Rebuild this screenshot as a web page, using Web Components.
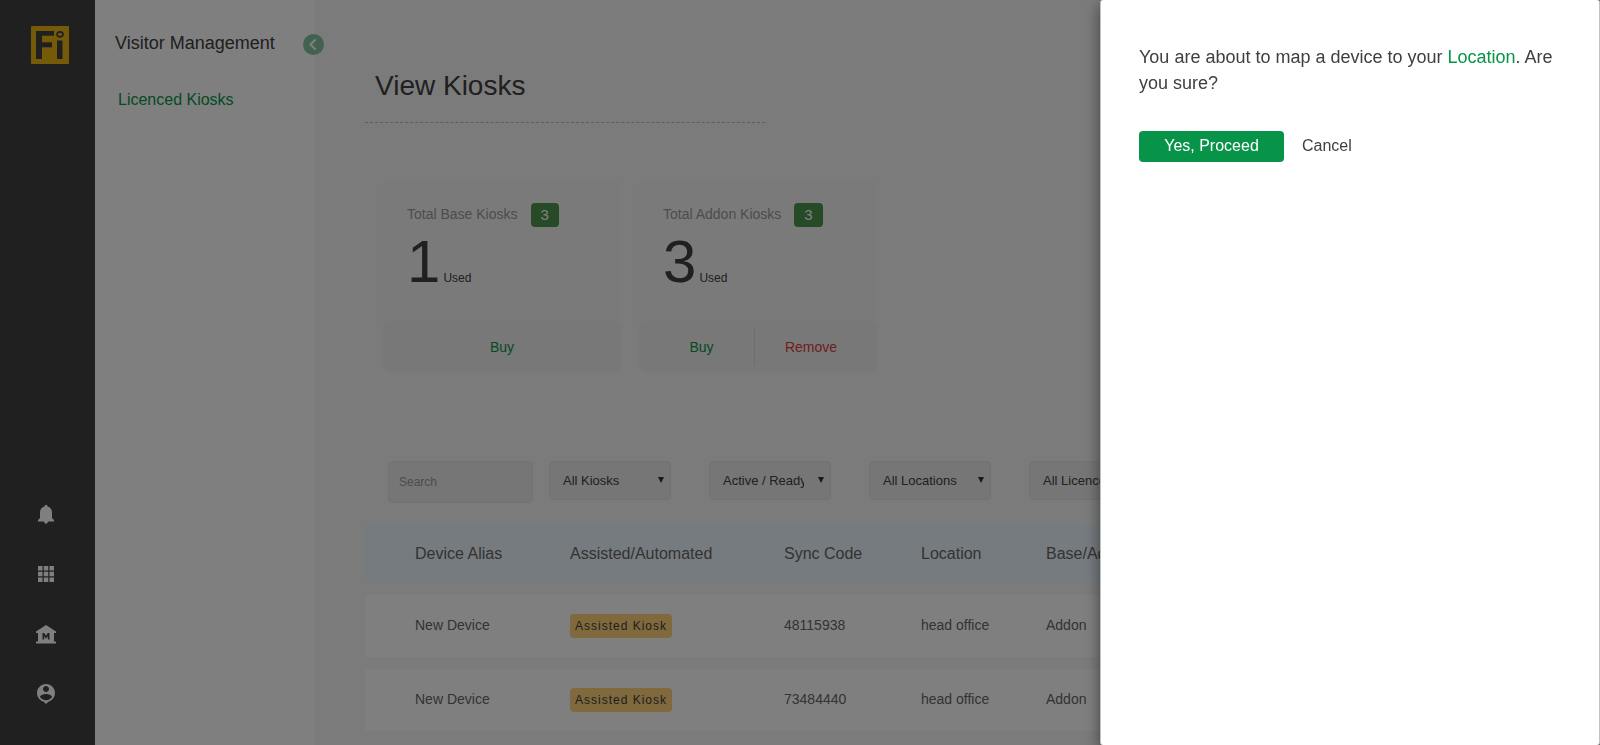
<!DOCTYPE html>
<html lang="en">
<head>
<meta charset="utf-8">
<title>View Kiosks</title>
<meta name="viewport" content="width=device-width, initial-scale=1">
<style>
  html, body { margin: 0; height: 100%; }
  body { font-family: "Liberation Sans", Arial, sans-serif; color: #404040; background: #f7f7f7; overflow: hidden; }
</style>
</head>
<body>
<kiosk-app></kiosk-app>
<script>
const define = (name, html) => {
  const template = document.createElement('template');
  template.innerHTML = html;
  customElements.define(name, class extends HTMLElement {
    constructor() {
      super();
      this.attachShadow({ mode: 'open' }).appendChild(template.content.cloneNode(true));
    }
  });
};

define('app-rail', `
  <style>
    :host { display: flex; flex-direction: column; justify-content: space-between; box-sizing: border-box; width: 95px; padding: 26px 0 21px; background: #404040; }
    .logo { display: block; width: 38px; height: 38px; margin-left: 31px; }
    nav { display: flex; flex-direction: column; padding-right: 3px; }
    button { display: grid; place-items: center; height: 60px; padding: 0; border: 0; background: none; color: #fff; }
    svg { display: block; }
  </style>
  <a class="logo" href="#" aria-label="Home">
    <svg width="38" height="38" viewBox="0 0 38 38">
      <rect width="38" height="38" rx="1" fill="#ebb414"/>
      <g fill="#404040">
        <rect x="5" y="5" width="6" height="28"/><rect x="5" y="5" width="18" height="4.700"/><rect x="5" y="16.300" width="16" height="5"/>
        <rect x="26" y="14.500" width="5.500" height="18.500"/>
      </g>
      <ellipse cx="29" cy="8.300" rx="3" ry="2.500" fill="none" stroke="#404040" stroke-width="1.700"/>
    </svg>
  </a>
  <nav aria-label="Main">
    <button aria-label="Notifications"><svg width="24" height="24" viewBox="0 0 24 24" fill="currentColor"><path d="M12 21.700c1.100 0 1.900-.9 1.900-2.200h-3.800c0 1.300.8 2.200 1.900 2.200zM18 16v-5.500c0-3-1.700-5.400-4.500-6V4.200a1.500 1.500 0 0 0-3 0v.3C7.700 5.100 6 7.500 6 10.500V16l-2 2v1.500h16V18z"/></svg></button>
    <button aria-label="Apps"><svg width="24" height="24" viewBox="0 0 24 24" fill="currentColor"><path d="M4 4h4.500v4.500H4zM9.750 4h4.500v4.500h-4.500zM15.500 4H20v4.500h-4.500zM4 9.750h4.500v4.500H4zM9.750 9.750h4.500v4.500h-4.500zM15.500 9.750H20v4.500h-4.500zM4 15.500h4.500V20H4zM9.750 15.500h4.500V20h-4.500zM15.500 15.500H20V20h-4.500z"/></svg></button>
    <button aria-label="Premises"><svg width="24" height="24" viewBox="0 0 24 24" fill="currentColor"><path fill-rule="evenodd" d="M12 3 2 9.500V11h2v8.500H2v2h20v-2h-2V11h2V9.500zM15.500 17.500h-1.700v-3.400L12 16.700l-1.800-2.600v3.400H8.500v-6.500h1.700l1.800 2.800 1.800-2.800h1.700z"/></svg></button>
    <button aria-label="Profile"><svg width="24" height="24" viewBox="0 0 24 24" fill="currentColor"><path d="M12 2c-4.970 0-9 4.030-9 9 0 4.170 2.840 7.670 6.690 8.690L12 22l2.310-2.310C18.160 18.670 21 15.170 21 11c0-4.970-4.030-9-9-9zm0 2c1.660 0 3 1.340 3 3s-1.340 3-3 3-3-1.340-3-3 1.340-3 3-3zm0 14.300c-2.500 0-4.710-1.280-6-3.220.03-1.990 4-3.080 6-3.080 1.990 0 5.970 1.090 6 3.080-1.290 1.940-3.500 3.220-6 3.220z"/></svg></button>
  </nav>`);

define('section-nav', `
  <style>
    :host { display: block; position: relative; box-sizing: border-box; width: 220px; padding: 30px 20px; background: #fff; }
    h2 { margin: 0; font-size: 18px; line-height: 26px; font-weight: 400; }
    a { display: block; margin: 31px 0 0 3px; font-size: 16px; line-height: 26px; color: #089448; text-decoration: none; }
    button { position: absolute; top: 34px; right: -9px; width: 21px; height: 21px; padding: 0; border: 0; border-radius: 50%; background: #84c4a0; }
    svg { display: block; }
  </style>
  <h2>Visitor Management</h2>
  <a href="#">Licenced Kiosks</a>
  <button aria-label="Collapse menu"><svg width="21" height="21" viewBox="0 0 21 21"><path d="M12.500 5.500 7.500 10.500l5 5" fill="none" stroke="#fff" stroke-width="2"/></svg></button>`);

define('kiosk-card', `
  <style>
    :host { display: flex; flex-direction: column; width: 238px; height: 193px; border-radius: 8px; background: #f5f5f5; }
    .body { flex: 1; padding: 24px 24px 0; }
    .label { display: flex; align-items: center; gap: 13px; height: 24px; font-size: 14px; color: #999; }
    ::slotted([slot="label"]) { padding-bottom: 2px; }
    .total { padding: 0 10px; border-radius: 4px; background: #4f954f; color: #fff; font-size: 15px; line-height: 24px; }
    .count { font-size: 60px; line-height: 70px; }
    small { font-size: 12px; margin-left: 3px; }
    footer { display: flex; align-items: center; box-sizing: border-box; height: 51px; padding: 0 10px; border-radius: 8px; border-top: 1px solid #ececec; background: #f1f1f1; }
    ::slotted(button) { flex: 1; height: 38px; padding: 0; border: 0; background: none; font: 14px "Liberation Sans", Arial, sans-serif; color: #089448; }
    ::slotted(.remove) { color: #dc3c3c; border-left: 1px solid #dcdcdc; border-radius: 0; flex-basis: 8px; }
  </style>
  <div class="body">
    <div class="label"><slot name="label"></slot><span class="total"><slot name="total"></slot></span></div>
    <div class="count"><slot name="used"></slot><small>Used</small></div>
  </div>
  <footer><slot name="action"></slot></footer>`);

customElements.define('filter-select', class extends HTMLElement {
  connectedCallback() {
    if (this.shadowRoot) return;
    const name = this.getAttribute('label');
    const text = this.getAttribute('value');
    this.attachShadow({ mode: 'open' }).innerHTML = `
      <style>
        :host { display: grid; width: 122px; height: 39px; }
        select, svg { grid-area: 1 / 1; }
        select { appearance: none; box-sizing: border-box; width: 100%; height: 100%; padding: 0 26px 0 13px; border: 1px solid #e4e4e4; border-radius: 4px; background: #ececec; color: #404040; font: 13px "Liberation Sans", Arial, sans-serif; }
        svg { place-self: center end; margin: 0 7px 2px 0; pointer-events: none; }
      </style>
      <select aria-label="${name}"><option>${text}</option></select>
      <svg width="6" height="6" viewBox="0 0 6 6"><path d="M0 0h6L3 6z" fill="#303030"/></svg>`;
  }
});

define('filter-bar', `
  <style>
    :host { display: flex; align-items: flex-start; gap: 38px; }
    input { box-sizing: border-box; width: 145px; height: 42px; margin-right: -22px; padding: 0 10px; border: 1px solid #e4e4e4; border-radius: 4px; background: #ececec; font: 12px "Liberation Sans", Arial, sans-serif; }
    input::placeholder { color: #999; opacity: 1; }
    filter-select { flex: none; }
  </style>
  <input type="text" placeholder="Search" aria-label="Search">
  <filter-select label="Kiosk type" value="All Kiosks"></filter-select>
  <filter-select label="Status" value="Active / Ready"></filter-select>
  <filter-select label="Location" value="All Locations"></filter-select>
  <filter-select label="Licence" value="All Licences"></filter-select>`);

define('kiosk-table', `
  <style>
    :host { display: block; }
    table { width: 100%; table-layout: fixed; border-spacing: 0 12px; color: #666; }
    th, td { box-sizing: border-box; padding: 0 0 0 16px; text-align: left; }
    th { height: 58px; background: #edf7ff; font-size: 16px; font-weight: 400; }
    td { height: 62px; padding-bottom: 2px; background: #fff; font-size: 14px; }
    td.type { padding-bottom: 0; }
    th:first-child, td:first-child { padding-left: 50px; }
    .alias { width: 189px; } .mode { width: 214px; } .code { width: 137px; } .place { width: 125px; }
    .tag { display: inline-block; padding: 0 5px; border-radius: 4px; background: #ffd27a; color: #404040; font-size: 12px; line-height: 24px; letter-spacing: 1px; }
  </style>
  <table>
    <thead><tr><th class="alias">Device Alias</th><th class="mode">Assisted/Automated</th><th class="code">Sync Code</th><th class="place">Location</th><th>Base/Addon</th></tr></thead>
    <tbody>
      <tr><td>New Device</td><td class="type"><span class="tag">Assisted Kiosk</span></td><td>48115938</td><td>head office</td><td>Addon</td></tr>
      <tr><td>New Device</td><td class="type"><span class="tag">Assisted Kiosk</span></td><td>73484440</td><td>head office</td><td>Addon</td></tr>
    </tbody>
  </table>`);

define('kiosk-page', `
  <style>
    :host { display: block; box-sizing: border-box; padding: 65px 50px 0; background: #f7f7f7; }
    h1 { box-sizing: border-box; width: 400px; max-width: 100%; height: 58px; margin: 0; padding-left: 10px; border-bottom: 1px dashed #bbb; font-size: 28px; line-height: 42px; font-weight: 400; }
    .cards { display: flex; gap: 18px; margin: 56px 18px 0; }
    filter-bar { margin: 89px 0 0 23px; }
    kiosk-table { margin-top: 10px; }
  </style>
  <h1>View Kiosks</h1>
  <div class="cards">
    <kiosk-card><span slot="label">Total Base Kiosks</span><span slot="total">3</span><span slot="used">1</span><button slot="action">Buy</button></kiosk-card>
    <kiosk-card><span slot="label">Total Addon Kiosks</span><span slot="total">3</span><span slot="used">3</span><button slot="action">Buy</button><button slot="action" class="remove">Remove</button></kiosk-card>
  </div>
  <filter-bar></filter-bar>
  <kiosk-table></kiosk-table>`);

define('confirm-drawer', `
  <style>
    :host { position: fixed; inset: 0; display: flex; justify-content: flex-end; background: rgba(0, 0, 0, .5); }
    section { box-sizing: border-box; width: 500px; max-width: 100%; padding: 44px 38px; border: solid #bbc4c2; border-width: 0 1px; border-radius: 3px; background: #fff; box-shadow: 0 5px 15px rgba(0, 0, 0, .5); }
    p { margin: 0; font-size: 18px; line-height: 26px; }
    .actions { display: flex; align-items: center; gap: 18px; margin-top: 35px; }
    button { height: 31px; padding: 0 0 2px; border: 0; background: none; color: #404040; font: 16px "Liberation Sans", Arial, sans-serif; }
    .primary { width: 145px; border-radius: 4px; background: #089448; color: #fff; }
    ::slotted(b) { font-weight: 400; color: #089448; }
  </style>
  <section role="dialog" aria-modal="true" aria-label="Confirm mapping">
    <p><slot></slot></p>
    <div class="actions"><button class="primary">Yes, Proceed</button><button>Cancel</button></div>
  </section>`);

define('kiosk-app', `
  <style>
    :host { display: grid; grid-template-columns: auto auto minmax(0, 1fr); min-height: 100vh; }
  </style>
  <app-rail></app-rail>
  <section-nav></section-nav>
  <kiosk-page></kiosk-page>
  <confirm-drawer>You are about to map a device to your <b>Location</b>. Are <span>you sure?</span></confirm-drawer>`);
</script>
</body>
</html>
